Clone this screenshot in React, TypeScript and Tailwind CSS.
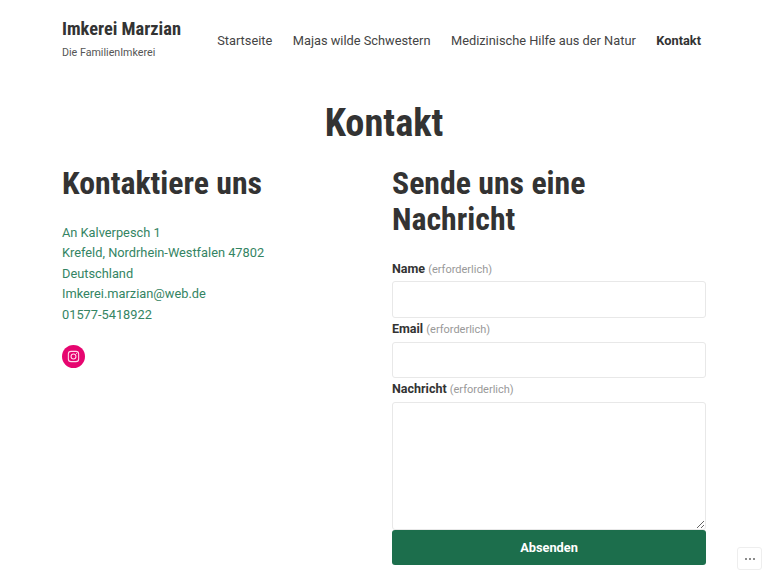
export default function App() {
  return (
    <div className="w-[768px] h-[576px] overflow-hidden bg-white text-[#333] relative font-['Roboto',sans-serif]">
      <header className="h-[80px] pl-[62px] pr-[67px] flex justify-between items-start">
        <div className="pt-[17px]">
          <div className="text-[18.4px] leading-[24px] font-bold [font-stretch:75%]">Imkerei Marzian</div>
          <div className="text-[10.7px] leading-[14px] mt-[5px] text-[#555]">Die FamilienImkerei</div>
        </div>
        <nav className="flex gap-[20.5px] text-[12.8px] leading-[16px] pt-[33px] text-[#444]">
          <a>Startseite</a>
          <a>Majas wilde Schwestern</a>
          <a>Medizinische Hilfe aus der Natur</a>
          <a className="font-bold text-[#333]">Kontakt</a>
        </nav>
      </header>

      <h1 className="text-center text-[38.4px] leading-[44px] font-bold [font-stretch:75%] mt-[21px]">Kontakt</h1>

      <main className="pl-[62px] pr-[62px] flex mt-[20px]">
        <section className="w-[330px]">
          <h2 className="text-[31.8px] leading-[36px] font-bold [font-stretch:75%]">Kontaktiere uns</h2>
          <div className="mt-[21.6px] text-[12.8px] leading-[20.5px] text-[#348463]">
            <p>An Kalverpesch 1</p>
            <p>Krefeld, Nordrhein-Westfalen 47802</p>
            <p>Deutschland</p>
            <p>Imkerei.marzian@web.de</p>
            <p>01577-5418922</p>
          </div>
          <a className="mt-[20px] w-[23px] h-[23px] rounded-full bg-[#e6056f] flex items-center justify-center">
            <svg width="13" height="13" viewBox="0 0 24 24" fill="none" stroke="#ffd9ec" strokeWidth="2">
              <rect x="2.5" y="2.5" width="19" height="19" rx="5" />
              <circle cx="12" cy="12" r="4.5" />
              <circle cx="17.5" cy="6.5" r="1" fill="#ffd9ec" stroke="none" />
            </svg>
          </a>
        </section>

        <section className="w-[314px]">
          <h2 className="text-[31.8px] leading-[36px] font-bold [font-stretch:75%]">Sende uns eine<br />Nachricht</h2>
          <form className="mt-[24px]">
            <label className="block text-[12.5px] leading-[16px] font-bold">
              Name <span className="font-normal text-[11px] text-[#999]">(erforderlich)</span>
            </label>
            <input className="block w-full h-[37px] mt-[3px] border border-[#e8e8e8] rounded-[3px] bg-white" />
            <label className="block text-[12.5px] leading-[16px] font-bold mt-[3px]">
              Email <span className="font-normal text-[11px] text-[#999]">(erforderlich)</span>
            </label>
            <input className="block w-full h-[36px] mt-[4px] border border-[#e8e8e8] rounded-[3px] bg-white" />
            <label className="block text-[12.5px] leading-[16px] font-bold mt-[3px]">
              Nachricht <span className="font-normal text-[11px] text-[#999]">(erforderlich)</span>
            </label>
            <textarea className="block w-full h-[128px] mt-[4px] border border-[#e8e8e8] rounded-[3px] bg-white" />
            <button type="button" className="block w-full h-[35px] bg-[#1c6e4c] text-white text-[12.8px] font-bold rounded-[3px]">Absenden</button>
          </form>
        </section>
      </main>

      <button className="absolute left-[737px] top-[547px] w-[25px] h-[23px] bg-white border border-[#eee] rounded-[3px] flex items-center justify-center gap-[2px]">
        <span className="w-[2px] h-[2px] rounded-full bg-[#666]" />
        <span className="w-[2px] h-[2px] rounded-full bg-[#666]" />
        <span className="w-[2px] h-[2px] rounded-full bg-[#666]" />
      </button>
    </div>
  );
}
